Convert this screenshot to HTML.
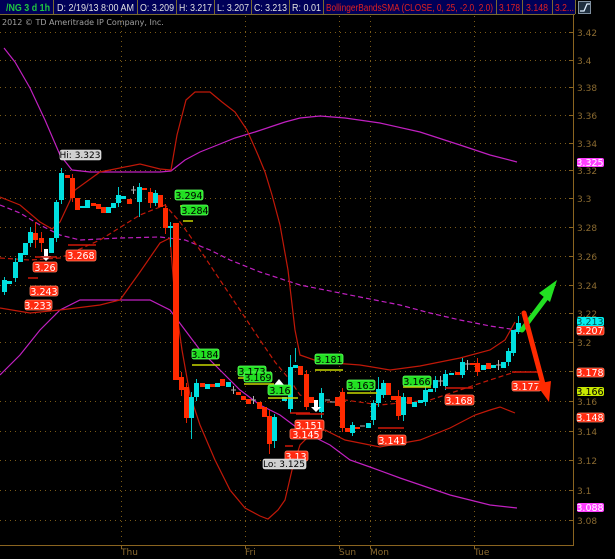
<!DOCTYPE html>
<html><head><meta charset="utf-8"><style>
html,body{margin:0;padding:0;background:#000;width:615px;height:559px;overflow:hidden}
svg{display:block}
text{font-family:"DejaVu Sans","Liberation Sans",sans-serif}
.h text{font-family:"Liberation Sans",sans-serif}
</style></head><body>
<svg width="615" height="559" viewBox="0 0 615 559" xmlns="http://www.w3.org/2000/svg">
<rect width="615" height="559" fill="#000"/>
<!-- header -->
<rect x="0" y="0" width="575" height="14" fill="#000058"/>
<g stroke="#7a6a30" stroke-width="1">
<line x1="0" y1="14.5" x2="575" y2="14.5"/>
<line x1="53.5" y1="0" x2="53.5" y2="14"/><line x1="137.5" y1="0" x2="137.5" y2="14"/>
<line x1="176.5" y1="0" x2="176.5" y2="14"/><line x1="214.5" y1="0" x2="214.5" y2="14"/>
<line x1="251.5" y1="0" x2="251.5" y2="14"/><line x1="289.5" y1="0" x2="289.5" y2="14"/>
<line x1="323.5" y1="0" x2="323.5" y2="14"/><line x1="496.5" y1="0" x2="496.5" y2="14"/>
<line x1="522.5" y1="0" x2="522.5" y2="14"/><line x1="552.5" y1="0" x2="552.5" y2="14"/>
<line x1="575.5" y1="0" x2="575.5" y2="14"/>
</g>
<g class="h" font-size="10" fill="#e0e0e0">
<text x="6" y="11" fill="#20c840" font-weight="bold" textLength="44" lengthAdjust="spacingAndGlyphs">/NG 3 d 1h</text>
<text x="57" y="11" textLength="77" lengthAdjust="spacingAndGlyphs">D: 2/19/13 8:00 AM</text>
<text x="140" y="11" textLength="34" lengthAdjust="spacingAndGlyphs">O: 3.209</text>
<text x="179" y="11" textLength="33" lengthAdjust="spacingAndGlyphs">H: 3.217</text>
<text x="217" y="11" textLength="32" lengthAdjust="spacingAndGlyphs">L: 3.207</text>
<text x="254" y="11" textLength="33" lengthAdjust="spacingAndGlyphs">C: 3.213</text>
<text x="292" y="11" textLength="29" lengthAdjust="spacingAndGlyphs">R: 0.01</text>
<text x="326" y="11" fill="#e02020" textLength="167" lengthAdjust="spacingAndGlyphs">BollingerBandsSMA (CLOSE, 0, 25, -2.0, 2.0)</text>
<text x="499" y="11" fill="#e02020" textLength="21" lengthAdjust="spacingAndGlyphs">3.178</text>
<text x="526" y="11" fill="#e02020" textLength="22" lengthAdjust="spacingAndGlyphs">3.148</text>
<text x="555" y="11" fill="#e02020" textLength="19" lengthAdjust="spacingAndGlyphs">3.2...</text>
</g>
<rect x="578.5" y="1.5" width="12" height="12" fill="#203040" stroke="#8090a0"/>
<path d="M580 11 H584 L587 4 H590" stroke="#e0f0ff" fill="none" stroke-width="1.3"/>
<text x="2" y="25" font-size="8" fill="#a0a0a0">2012 © TD Ameritrade IP Company, Inc.</text>
<!-- grid -->
<g stroke="#7a5a18" stroke-width="1" stroke-dasharray="1,4">
<line x1="0" x2="570" y1="32.5" y2="32.5"/><line x1="0" x2="570" y1="60.5" y2="60.5"/>
<line x1="0" x2="570" y1="87.5" y2="87.5"/><line x1="0" x2="570" y1="115.5" y2="115.5"/>
<line x1="0" x2="570" y1="143.5" y2="143.5"/><line x1="0" x2="570" y1="170.5" y2="170.5"/>
<line x1="0" x2="570" y1="198.5" y2="198.5"/><line x1="0" x2="570" y1="227.5" y2="227.5"/>
<line x1="0" x2="570" y1="256.5" y2="256.5"/><line x1="0" x2="570" y1="285.5" y2="285.5"/>
<line x1="0" x2="570" y1="313.5" y2="313.5"/><line x1="0" x2="570" y1="342.5" y2="342.5"/>
<line x1="0" x2="570" y1="371.5" y2="371.5"/><line x1="0" x2="570" y1="401.5" y2="401.5"/>
<line x1="0" x2="570" y1="431.5" y2="431.5"/><line x1="0" x2="570" y1="460.5" y2="460.5"/>
<line x1="0" x2="570" y1="490.5" y2="490.5"/><line x1="0" x2="570" y1="520.5" y2="520.5"/>
<line x1="121.5" x2="121.5" y1="16" y2="545"/><line x1="245.5" x2="245.5" y1="16" y2="545"/>
<line x1="339.5" x2="339.5" y1="16" y2="545"/><line x1="370.5" x2="370.5" y1="16" y2="545"/>
<line x1="474.5" x2="474.5" y1="16" y2="545"/>
</g>
<g stroke="#8a6420" stroke-width="1">
<line x1="573.5" y1="15" x2="573.5" y2="545"/><line x1="0" y1="545.5" x2="574" y2="545.5"/>
<path d="M569 32.5h4M569 60.5h4M569 87.5h4M569 115.5h4M569 143.5h4M569 170.5h4M569 198.5h4M569 227.5h4M569 256.5h4M569 285.5h4M569 313.5h4M569 342.5h4M569 371.5h4M569 401.5h4M569 431.5h4M569 460.5h4M569 490.5h4M569 520.5h4M121.5 545v4M245.5 545v4M339.5 545v4M370.5 545v4M474.5 545v4"/>
</g>
<g font-size="9" fill="#8a6a30">
<text x="577" y="36">3.42</text><text x="577" y="64">3.4</text><text x="577" y="91">3.38</text>
<text x="577" y="119">3.36</text><text x="577" y="147">3.34</text><text x="577" y="174">3.32</text>
<text x="577" y="202">3.3</text><text x="577" y="231">3.28</text><text x="577" y="260">3.26</text>
<text x="577" y="289">3.24</text><text x="577" y="317">3.22</text><text x="577" y="346">3.2</text>
<text x="577" y="375">3.18</text><text x="577" y="405">3.16</text><text x="577" y="435">3.14</text>
<text x="577" y="464">3.12</text><text x="577" y="494">3.1</text><text x="577" y="524">3.08</text>
<text x="121" y="555">Thu</text><text x="245" y="555">Fri</text><text x="339" y="555">Sun</text>
<text x="370" y="555">Mon</text><text x="474" y="555">Tue</text>
</g>
<!-- bands -->
<g fill="none" stroke-width="1.2">
<polyline stroke="#c020c0" points="4,48 15,62 30,88 45,120 60,155 72,170 90,172 130,172 160,172 171,171 185,160 200,152 215,146 235,138 255,132 270,127 285,122 300,118 320,116 345,118 380,123 420,132 460,145 490,155 517,162"/>
<polyline stroke="#c020c0" points="0,375 20,355 40,330 60,310 80,300 150,300 170,310 185,330 200,350 220,370 240,390 260,405 280,415 300,430 330,445 350,460 370,467 400,478 450,495 490,505 517,508"/>
<polyline stroke="#c020c0" stroke-dasharray="5,3" points="0,205 20,213 40,225 60,235 80,240 120,238 160,237 185,240 210,250 230,260 260,272 300,285 350,295 400,305 430,313 460,320 490,326 517,330"/>
<polyline stroke="#c01808" points="0,197 20,205 40,222 52,229 60,222 75,190 100,172 140,164 160,169 171,170 177,135 186,100 195,92 210,92 222,102 235,112 247,130 258,155 265,172 272,195 280,225 288,270 295,330 300,355 320,362 360,365 390,370 420,366 460,358 490,350 505,340 515,322"/>
<polyline stroke="#c01808" points="0,308 30,313 60,310 100,305 120,300 140,272 160,243 170,238 175,300 182,350 190,395 200,425 215,460 230,490 245,508 260,516 268,519 278,510 285,500 292,470 300,445 312,433 325,430 345,440 380,447 420,440 450,428 475,415 490,410 500,407 515,413"/>
<polyline stroke="#c01808" stroke-dasharray="5,3" points="0,258 30,260 60,258 100,240 140,215 165,205 180,222 200,250 220,280 240,310 260,340 275,362 290,380 300,395 320,403 345,400 380,405 430,400 460,390 490,380 515,372"/>
</g>
<!-- candles -->
<g stroke="#00c8c8" stroke-width="1">
<path d="M4.5 277v18M15.5 258v24M30.5 227v20M56.5 200v42M61.5 168v36M118.5 187v20M139.5 183v34M155.5 190v16M170.5 222v25M191.5 392v47M196.5 379v22M274.5 414v34M290.5 355v58M295.5 348v14M321.5 388v30M352.5 422v14M373.5 400v25M378.5 377v30M383.5 380v18M403.5 393v28M425.5 386v20M435.5 376v16M445.5 370v20M462.5 358v20M508.5 348v18M513.5 332v24M518.5 316v18"/>
</g>
<g fill="#00e0e0">
<rect x="2" y="280" width="5" height="12"/><rect x="7" y="281" width="5" height="3"/>
<rect x="13" y="262" width="5" height="16"/><rect x="18" y="253" width="5" height="9"/>
<rect x="23" y="243" width="5" height="12"/><rect x="28" y="232" width="5" height="11"/>
<rect x="49" y="238" width="5" height="15"/><rect x="54" y="202" width="5" height="36"/>
<rect x="59" y="173" width="5" height="27"/><rect x="80" y="206" width="5" height="2"/>
<rect x="85" y="200" width="5" height="8"/><rect x="106" y="207" width="5" height="6"/>
<rect x="111" y="203" width="5" height="5"/><rect x="116" y="195" width="5" height="8"/>
<rect x="121" y="196" width="5" height="3"/><rect x="137" y="187" width="5" height="15"/>
<rect x="153" y="193" width="5" height="10"/><rect x="168" y="226" width="5" height="2"/>
<rect x="189" y="397" width="5" height="21"/><rect x="194" y="383" width="5" height="14"/>
<rect x="205" y="384" width="5" height="5"/><rect x="215" y="383" width="5" height="4"/>
<rect x="226" y="382" width="5" height="5"/><rect x="272" y="417" width="5" height="24"/>
<rect x="282" y="397" width="5" height="4"/><rect x="288" y="367" width="5" height="42"/>
<rect x="293" y="365" width="5" height="3"/><rect x="319" y="393" width="5" height="19"/>
<rect x="350" y="425" width="5" height="8"/><rect x="366" y="423" width="5" height="5"/>
<rect x="371" y="403" width="5" height="17"/><rect x="376" y="389" width="5" height="14"/>
<rect x="381" y="383" width="5" height="12"/><rect x="401" y="397" width="5" height="18"/>
<rect x="412" y="402" width="5" height="5"/><rect x="418" y="400" width="5" height="3"/>
<rect x="423" y="390" width="5" height="12"/><rect x="428" y="389" width="5" height="3"/>
<rect x="433" y="380" width="5" height="8"/><rect x="443" y="374" width="5" height="12"/>
<rect x="449" y="373" width="5" height="2"/><rect x="460" y="362" width="5" height="13"/>
<rect x="481" y="365" width="5" height="5"/><rect x="491" y="365" width="5" height="3"/>
<rect x="501" y="362" width="5" height="6"/><rect x="506" y="351" width="5" height="11"/>
<rect x="511" y="330" width="5" height="23"/><rect x="516" y="323" width="5" height="9"/>
</g>
<g stroke="#e02000" stroke-width="1"><path d="M35.5 222v26M41.5 232v20M72.5 174v28M150.5 188v20M165.5 204v30M181.5 372v24M186.5 383v40M269.5 410v44M306.5 370v40M342.5 388v44M398.5 390v30M477.5 358v18"/></g>
<g fill="#ff2a00">
<rect x="33" y="233" width="5" height="7"/><rect x="39" y="238" width="5" height="5"/>
<rect x="65" y="175" width="5" height="3"/><rect x="70" y="178" width="5" height="20"/>
<rect x="75" y="198" width="5" height="12"/><rect x="91" y="203" width="5" height="3"/>
<rect x="96" y="204" width="5" height="5"/><rect x="101" y="207" width="5" height="6"/>
<rect x="127" y="199" width="5" height="5"/><rect x="142" y="188" width="5" height="2"/>
<rect x="148" y="192" width="5" height="11"/><rect x="158" y="195" width="5" height="12"/>
<rect x="163" y="208" width="5" height="20"/><rect x="173" y="223" width="6" height="157"/>
<rect x="179" y="377" width="5" height="13"/><rect x="184" y="387" width="5" height="31"/>
<rect x="200" y="383" width="5" height="4"/><rect x="210" y="384" width="5" height="3"/>
<rect x="220" y="379" width="5" height="7"/><rect x="236" y="392" width="5" height="3"/>
<rect x="241" y="396" width="5" height="4"/><rect x="246" y="399" width="5" height="5"/>
<rect x="257" y="402" width="5" height="7"/><rect x="262" y="407" width="5" height="10"/>
<rect x="267" y="416" width="5" height="28"/><rect x="298" y="366" width="5" height="9"/>
<rect x="304" y="374" width="5" height="33"/><rect x="309" y="397" width="5" height="6"/>
<rect x="335" y="397" width="5" height="9"/><rect x="340" y="392" width="5" height="36"/>
<rect x="345" y="428" width="5" height="4"/><rect x="355" y="427" width="5" height="2"/>
<rect x="386" y="383" width="5" height="12"/><rect x="391" y="396" width="5" height="4"/>
<rect x="396" y="396" width="5" height="20"/><rect x="407" y="397" width="5" height="7"/>
<rect x="455" y="372" width="5" height="3"/><rect x="470" y="363" width="5" height="2"/>
<rect x="475" y="363" width="5" height="9"/><rect x="486" y="363" width="5" height="6"/>
</g>
<g stroke="#b0b0b0"><path d="M131 190h5M231 390h5M251 400h5M325 400h5M330 402h5M360 426h5M438 381h5M465 364h5M496 365h5M133.5 186v8M233.5 386v8M253.5 396v8M440.5 376v10M467.5 360v10M498.5 360v10"/></g>
<!-- white arrows -->
<g fill="#fff"><path d="M44 249h4v7h3l-5 5-5-5h3z"/><path d="M277 392h4v-7h3l-5-6-5 6h3z"/><path d="M314 400h4v7h3l-5 5-5-5h3z"/></g>
<!-- marker lines -->
<g stroke-width="1.5"><path stroke="#d01808" d="M35 257h22M68 245h28M28 278h10M296 414h28M290 413h20M285 446h8M378 428h26M445 388h28M512 372h30" fill="none"/>
<path stroke="#c8d800" d="M180 206h8M183 221h10M192 365h28M238 378h10M244 384h30M268 398h30M315 370h28M347 393h30M403 387h28" fill="none"/></g>
<!-- tags -->
<g font-size="9.5" text-anchor="middle">
<g fill="#ff2a10" stroke="#ff8060" stroke-width="0.8">
<rect x="33" y="262" width="24" height="10" rx="2"/><rect x="66" y="250" width="30" height="11" rx="2"/>
<rect x="30" y="286" width="28" height="10" rx="2"/><rect x="25" y="300" width="27" height="10" rx="2"/>
<rect x="295" y="420" width="29" height="10" rx="2"/><rect x="290" y="429" width="32" height="10" rx="2"/>
<rect x="285" y="451" width="23" height="10" rx="2"/><rect x="378" y="435" width="28" height="10" rx="2"/>
<rect x="445" y="395" width="29" height="10" rx="2"/><rect x="512" y="381" width="29" height="10" rx="2"/>
<rect x="577" y="326" width="27" height="9" rx="2"/><rect x="577" y="368" width="27" height="9" rx="2"/>
<rect x="577" y="413" width="27" height="9" rx="2"/>
</g>
<g fill="#fff"><text x="45" y="271">3.26</text><text x="81" y="259">3.268</text><text x="44" y="295">3.243</text>
<text x="38" y="309">3.233</text><text x="309" y="429">3.151</text><text x="306" y="438">3.145</text>
<text x="296" y="460">3.13</text><text x="392" y="444">3.141</text><text x="459" y="404">3.168</text>
<text x="526" y="390">3.177</text><text x="590" y="334">3.207</text><text x="590" y="376">3.178</text><text x="590" y="421">3.148</text></g>
<g fill="#22e022" stroke="#60ff60" stroke-width="0.8">
<rect x="175" y="190" width="28" height="10" rx="2"/><rect x="181" y="205" width="27" height="10" rx="2"/>
<rect x="192" y="349" width="27" height="10" rx="2"/><rect x="238" y="366" width="28" height="10" rx="2"/>
<rect x="244" y="372" width="28" height="10" rx="2"/><rect x="268" y="385" width="23" height="10" rx="2"/>
<rect x="315" y="354" width="28" height="10" rx="2"/><rect x="347" y="380" width="28" height="10" rx="2"/>
<rect x="403" y="376" width="28" height="10" rx="2"/>
</g>
<g fill="#000"><text x="189" y="199">3.294</text><text x="195" y="214">3.284</text><text x="205" y="358">3.184</text>
<text x="252" y="375">3.173</text><text x="258" y="381">3.169</text><text x="280" y="394">3.16</text>
<text x="329" y="363">3.181</text><text x="361" y="389">3.163</text><text x="417" y="385">3.166</text></g>
<g fill="#d0d0d0" stroke="#f0f0f0" stroke-width="0.6"><rect x="60" y="150" width="41" height="10" rx="2"/><rect x="263" y="459" width="43" height="10" rx="2"/></g>
<g fill="#000" font-size="9"><text x="80" y="158">Hi: 3.323</text><text x="284" y="467">Lo: 3.125</text></g>
<rect x="577" y="158" width="27" height="9" rx="2" fill="#ff40ff"/><text x="590" y="166" fill="#fff">3.325</text>
<rect x="577" y="317" width="27" height="9" rx="2" fill="#00f0f0"/><text x="590" y="325" fill="#005050">3.213</text>
<rect x="577" y="387" width="27" height="9" rx="2" fill="#c8e800"/><text x="590" y="395" fill="#000">3.166</text>
<rect x="577" y="503" width="27" height="9" rx="2" fill="#ff40ff"/><text x="590" y="511" fill="#fff">3.088</text>
</g>
<!-- big arrows -->
<path d="M522 330 L546 298" stroke="#22e022" stroke-width="5" stroke-linecap="round"/>
<path d="M557 280 L550 302 L539 293 Z" fill="#22e022"/>
<path d="M524 313 L543 384" stroke="#ff2a00" stroke-width="5" stroke-linecap="round"/>
<path d="M549 402 L536 384 L551 381 Z" fill="#ff2a00"/>
</svg>
</body></html>
